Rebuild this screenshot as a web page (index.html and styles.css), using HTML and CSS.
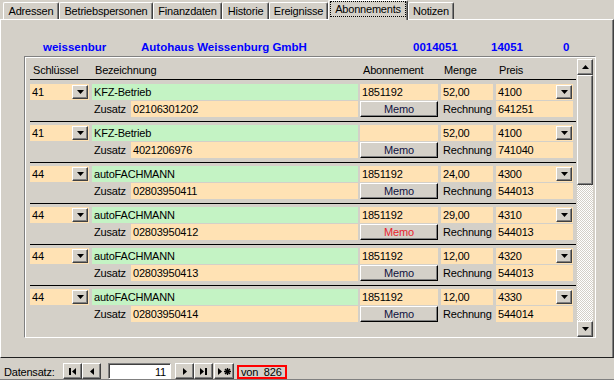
FILE: index.html
```html
<!DOCTYPE html>
<html lang="de">
<head>
  <meta charset="UTF-8">
  <title>Kunde - Abonnements</title>
  <link rel="stylesheet" href="styles.css">
</head>
<body>
  <div class="window">
    <div class="tabs">
      <div class="tab tab-adr">Adressen</div>
      <div class="tab tab-bp">Betriebspersonen</div>
      <div class="tab tab-fin">Finanzdaten</div>
      <div class="tab tab-hist">Historie</div>
      <div class="tab tab-ereig">Ereignisse</div>
      <div class="tab tab-abo active"><span class="focus">Abonnements</span></div>
      <div class="tab tab-not">Notizen</div>
    </div>

    <div class="panel">
      <div class="summary">
        <span class="sum-kurz">weissenbur</span>
        <span class="sum-name">Autohaus Weissenburg GmbH</span>
        <span class="sum-nr">0014051</span>
        <span class="sum-knr">14051</span>
        <span>0</span>
      </div>

      <div class="subform">
        <div class="sub-main">
          <div class="sub-head">
            <div class="c-key">Schlüssel</div>
            <div class="c-bez">Bezeichnung</div>
            <div class="c-abo">Abonnement</div>
            <div class="c-menge">Menge</div>
            <div class="c-preis">Preis</div>
          </div>

          <div class="record">
            <div class="line">
              <div class="field c-key"><span class="val">41</span><span class="combo"><svg width="7" height="4"><path d="M0 0H7L3.5 4Z"/></svg></span></div>
              <div class="field green c-bez">KFZ-Betrieb</div>
              <div class="field c-abo">1851192</div>
              <div class="field c-menge">52,00</div>
              <div class="field c-preis"><span class="val">4100</span><span class="combo"><svg width="7" height="4"><path d="M0 0H7L3.5 4Z"/></svg></span></div>
            </div>
            <div class="line">
              <div class="c-space"></div>
              <div class="lbl c-label">Zusatz</div>
              <div class="field c-zusatz">02106301202</div>
              <div class="btn c-abo">Memo</div>
              <div class="lbl c-menge">Rechnung</div>
              <div class="field c-preis">641251</div>
            </div>
          </div>

          <div class="record">
            <div class="line">
              <div class="field c-key"><span class="val">41</span><span class="combo"><svg width="7" height="4"><path d="M0 0H7L3.5 4Z"/></svg></span></div>
              <div class="field green c-bez">KFZ-Betrieb</div>
              <div class="field c-abo"></div>
              <div class="field c-menge">52,00</div>
              <div class="field c-preis"><span class="val">4100</span><span class="combo"><svg width="7" height="4"><path d="M0 0H7L3.5 4Z"/></svg></span></div>
            </div>
            <div class="line">
              <div class="c-space"></div>
              <div class="lbl c-label">Zusatz</div>
              <div class="field c-zusatz">4021206976</div>
              <div class="btn c-abo">Memo</div>
              <div class="lbl c-menge">Rechnung</div>
              <div class="field c-preis">741040</div>
            </div>
          </div>

          <div class="record">
            <div class="line">
              <div class="field c-key"><span class="val">44</span><span class="combo"><svg width="7" height="4"><path d="M0 0H7L3.5 4Z"/></svg></span></div>
              <div class="field green c-bez">autoFACHMANN</div>
              <div class="field c-abo">1851192</div>
              <div class="field c-menge">24,00</div>
              <div class="field c-preis"><span class="val">4300</span><span class="combo"><svg width="7" height="4"><path d="M0 0H7L3.5 4Z"/></svg></span></div>
            </div>
            <div class="line">
              <div class="c-space"></div>
              <div class="lbl c-label">Zusatz</div>
              <div class="field c-zusatz">02803950411</div>
              <div class="btn c-abo">Memo</div>
              <div class="lbl c-menge">Rechnung</div>
              <div class="field c-preis">544013</div>
            </div>
          </div>

          <div class="record">
            <div class="line">
              <div class="field c-key"><span class="val">44</span><span class="combo"><svg width="7" height="4"><path d="M0 0H7L3.5 4Z"/></svg></span></div>
              <div class="field green c-bez">autoFACHMANN</div>
              <div class="field c-abo">1851192</div>
              <div class="field c-menge">29,00</div>
              <div class="field c-preis"><span class="val">4310</span><span class="combo"><svg width="7" height="4"><path d="M0 0H7L3.5 4Z"/></svg></span></div>
            </div>
            <div class="line">
              <div class="c-space"></div>
              <div class="lbl c-label">Zusatz</div>
              <div class="field c-zusatz">02803950412</div>
              <div class="btn c-abo has-memo">Memo</div>
              <div class="lbl c-menge">Rechnung</div>
              <div class="field c-preis">544013</div>
            </div>
          </div>

          <div class="record">
            <div class="line">
              <div class="field c-key"><span class="val">44</span><span class="combo"><svg width="7" height="4"><path d="M0 0H7L3.5 4Z"/></svg></span></div>
              <div class="field green c-bez">autoFACHMANN</div>
              <div class="field c-abo">1851192</div>
              <div class="field c-menge">12,00</div>
              <div class="field c-preis"><span class="val">4320</span><span class="combo"><svg width="7" height="4"><path d="M0 0H7L3.5 4Z"/></svg></span></div>
            </div>
            <div class="line">
              <div class="c-space"></div>
              <div class="lbl c-label">Zusatz</div>
              <div class="field c-zusatz">02803950413</div>
              <div class="btn c-abo">Memo</div>
              <div class="lbl c-menge">Rechnung</div>
              <div class="field c-preis">544013</div>
            </div>
          </div>

          <div class="record">
            <div class="line">
              <div class="field c-key"><span class="val">44</span><span class="combo"><svg width="7" height="4"><path d="M0 0H7L3.5 4Z"/></svg></span></div>
              <div class="field green c-bez">autoFACHMANN</div>
              <div class="field c-abo">1851192</div>
              <div class="field c-menge">12,00</div>
              <div class="field c-preis"><span class="val">4330</span><span class="combo"><svg width="7" height="4"><path d="M0 0H7L3.5 4Z"/></svg></span></div>
            </div>
            <div class="line">
              <div class="c-space"></div>
              <div class="lbl c-label">Zusatz</div>
              <div class="field c-zusatz">02803950414</div>
              <div class="btn c-abo">Memo</div>
              <div class="lbl c-menge">Rechnung</div>
              <div class="field c-preis">544014</div>
            </div>
          </div>
        </div>

        <div class="vscroll">
          <div class="sb-btn"><svg width="7" height="4"><path d="M0 4H7L3.5 0Z"/></svg></div>
          <div class="sb-thumb"></div>
          <div class="sb-track"></div>
          <div class="sb-btn"><svg width="7" height="4"><path d="M0 0H7L3.5 4Z"/></svg></div>
        </div>
      </div>
    </div>

    <div class="navbar">
      <span class="nav-label">Datensatz:</span>
      <div class="nav-btn"><svg width="7" height="7"><rect x="0" y="0" width="2" height="7"/><path d="M7 0V7L3 3.5Z"/></svg></div>
      <div class="nav-btn"><svg width="4" height="7"><path d="M4 0V7L0 3.5Z"/></svg></div>
      <div class="nav-pos">11</div>
      <div class="nav-btn nav-next"><svg width="4" height="7"><path d="M0 0V7L4 3.5Z"/></svg></div>
      <div class="nav-btn"><svg width="7" height="7"><path d="M0 0V7L4 3.5Z"/><rect x="5" y="0" width="2" height="7"/></svg></div>
      <div class="nav-btn nav-new"><svg width="13" height="7"><path d="M0 0V7L4 3.5Z"/><g stroke="#000" stroke-width="1.4"><path d="M9.5 0V7M6 3.5H13M7 1L12 6M12 1L7 6"/></g></svg></div>
      <div class="nav-total">von&nbsp; 826</div>
    </div>
  </div>
</body>
</html>
```

FILE: styles.css
```css
* {
  box-sizing: border-box;
}

body {
  margin: 0;
  background-color: #d4d0c8;
  font-family: "Liberation Sans", Arial, sans-serif;
  font-size: 11px;
  letter-spacing: -0.2px;
  color: #000;
}

svg {
  display: block;
}

.window {
  width: 614px;
  height: 380px;
  overflow: hidden;
}

/* tab strip */

.tabs {
  display: flex;
  align-items: flex-end;
  height: 19px;
  padding-left: 3px;
}

.tab {
  height: 17px;
  line-height: 16px;
  text-align: center;
  white-space: nowrap;
  border-top: 1px solid #fff;
  border-left: 1px solid #fff;
  border-right: 1px solid #404040;
  border-radius: 2px 2px 0 0;
  box-shadow: inset -1px 0 #808080;
}

.tab-adr { width: 56px; }
.tab-bp { width: 94px; }
.tab-fin { width: 69px; }
.tab-hist { width: 47px; }
.tab-ereig { width: 59px; }
.tab-abo { width: 80px; }
.tab-not { width: 46px; }

.tab.active {
  position: relative;
  z-index: 1;
  height: 20px;
  margin-bottom: -1px;
  background-color: #d4d0c8;
}

.focus {
  display: block;
  height: 16px;
  margin: 0 1px 0 1px;
  line-height: 14px;
  border: 1px dotted #000;
}

/* main page */

.panel {
  height: 339px;
  border-top: 1px solid #fff;
  border-left: 1px solid #fff;
  border-right: 1px solid #404040;
  border-bottom: 1px solid #202020;
  box-shadow: inset -1px 0 #808080;
}

.summary {
  display: flex;
  height: 14px;
  margin-top: 20px;
  padding-left: 42px;
  line-height: 14px;
  font-size: 11.5px;
  font-weight: bold;
  letter-spacing: 0;
  color: #0000ff;
  white-space: nowrap;
}

.sum-kurz { width: 98px; }
.sum-name { width: 272px; }
.sum-nr { width: 78px; }
.sum-knr { width: 72px; }

.subform {
  display: flex;
  width: 572px;
  height: 282px;
  margin: 2px 0 0 23px;
  border: 1px solid;
  border-color: #808080 #fff #fff #808080;
  box-shadow: inset 1px 1px #fff;
}

.sub-main {
  width: 551px;
  padding-left: 5px;
}

.sub-head {
  display: flex;
  height: 23px;
  padding-top: 7px;
  margin-bottom: 1px;
  line-height: 13px;
  border-bottom: 1px solid #000;
}

.sub-head div {
  padding-left: 3px;
}

.record {
  padding: 3px 0 4px;
}

.record + .record {
  border-top: 1px solid #000;
}

.line {
  display: flex;
  height: 16px;
}

.line + .line {
  margin-top: 1px;
}

/* column widths */
.c-key { width: 59px; }
.c-bez { width: 266px; margin-left: 3px; }
.c-abo { width: 78px; margin-left: 2px; }
.c-menge { width: 52px; margin-left: 3px; }
.c-preis { width: 77px; margin-left: 3px; }
.c-space { width: 62px; }
.c-label { width: 39px; }
.c-zusatz { width: 227px; }

.field {
  display: flex;
  height: 16px;
  padding-left: 2px;
  line-height: 16px;
  white-space: nowrap;
  overflow: hidden;
  background-color: #ffe2b4;
}

.field.green {
  background-color: #c4f3c4;
}

.val {
  flex: 1;
}

.lbl {
  padding-left: 2px;
  line-height: 16px;
  white-space: nowrap;
}

.combo {
  display: flex;
  align-items: center;
  justify-content: center;
  width: 16px;
  height: 14px;
  margin: 1px 1px 1px 0;
  background-color: #d4d0c8;
  border: 1px solid;
  border-color: #fff #404040 #404040 #fff;
  box-shadow: inset -1px -1px #808080;
}

.btn {
  height: 16px;
  line-height: 14px;
  text-align: center;
  color: #101040;
  background-color: #d4d0c8;
  border: 1px solid;
  border-color: #fff #000 #000 #fff;
  box-shadow: inset -1px -1px #808080;
}

.btn.has-memo {
  color: #e8232e;
}

/* scrollbar */

.vscroll {
  display: flex;
  flex-direction: column;
  width: 16px;
  height: 278px;
  margin: 2px 0 0 1px;
}

.sb-btn,
.sb-thumb {
  background-color: #d4d0c8;
  border: 1px solid;
  border-color: #fff #404040 #404040 #fff;
  box-shadow: inset -1px -1px #808080;
}

.sb-btn {
  display: flex;
  align-items: center;
  justify-content: center;
  height: 16px;
}

.sb-thumb {
  height: 110px;
}

.sb-track {
  flex: 1;
  background: repeating-conic-gradient(#fff 0% 25%, #d4d0c8 0% 50%) 0 0 / 2px 2px;
}

/* record navigation */

.navbar {
  display: flex;
  align-items: flex-start;
  height: 22px;
  padding: 5px 0 0 4px;
  border-bottom: 1px solid #808080;
}

.nav-label {
  width: 59px;
  padding-top: 1px;
  line-height: 16px;
}

.nav-btn {
  display: flex;
  align-items: center;
  justify-content: center;
  width: 19px;
  height: 16px;
  background-color: #d4d0c8;
  border: 1px solid;
  border-color: #fff #404040 #404040 #fff;
  box-shadow: inset -1px -1px #808080;
}

.nav-pos {
  width: 63px;
  height: 16px;
  margin: 0 4px 0 7px;
  padding: 2px 4px 0 0;
  line-height: 12px;
  text-align: right;
  background-color: #fff;
  border: 1px solid;
  border-color: #808080 #fff #fff #808080;
  box-shadow: inset 1px 1px #404040;
}

.nav-new {
  width: 20px;
  margin-left: 1px;
}

.nav-total {
  height: 14px;
  margin: 2px 0 0 3px;
  padding: 0 3px 0 2px;
  line-height: 10px;
  white-space: nowrap;
  border: 2px solid #ff0000;
}
```
